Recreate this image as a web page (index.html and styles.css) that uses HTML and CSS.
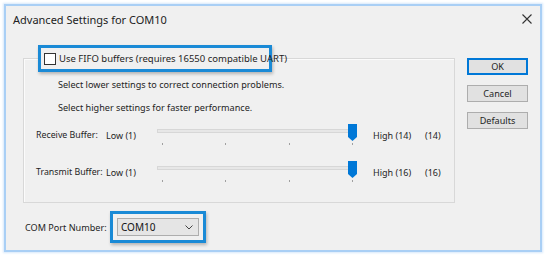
FILE: index.html
```html
<!DOCTYPE html>
<html>
<head>
<meta charset="utf-8">
<link rel="stylesheet" href="styles.css">
</head>
<body>
<div class="window">
  <div class="titlebar">
    <span class="title">Advanced Settings for COM10</span>
    <svg class="close" width="10" height="10" viewBox="0 0 10 10"><path d="M0.5 0.5L9.5 9.5M9.5 0.5L0.5 9.5" stroke="#333" stroke-width="1.1" fill="none"/></svg>
  </div>
  <div class="main">
    <div class="left">
      <fieldset class="group">
        <legend class="hl legend">
          <label class="check"><span class="box"></span>Use FIFO buffers (requires 16550 compatible UART)</label>
        </legend>
        <p class="hint first">Select lower settings to correct connection problems.</p>
        <p class="hint">Select higher settings for faster performance.</p>
        <div class="srow">
          <span class="lbl">Receive Buffer:</span>
          <span class="low">Low (1)</span>
          <div class="slider">
            <div class="track"></div>
            <svg class="thumb" width="9" height="17" viewBox="0 0 9 17"><path d="M0 0H9V13L4.5 17L0 13Z" fill="#0078d7"/></svg>
            <div class="ticks"><i></i><i></i><i></i><i></i></div>
          </div>
          <span class="high">High (14)</span>
          <span class="val">(14)</span>
        </div>
        <div class="srow second">
          <span class="lbl">Transmit Buffer:</span>
          <span class="low">Low (1)</span>
          <div class="slider">
            <div class="track"></div>
            <svg class="thumb" width="9" height="17" viewBox="0 0 9 17"><path d="M0 0H9V13L4.5 17L0 13Z" fill="#0078d7"/></svg>
            <div class="ticks"><i></i><i></i><i></i><i></i></div>
          </div>
          <span class="high">High (16)</span>
          <span class="val">(16)</span>
        </div>
      </fieldset>
      <div class="comrow">
        <span class="comlbl">COM Port Number:</span>
        <div class="hl comhl">
          <div class="combo">
            <span>COM10</span>
            <svg width="8" height="5" viewBox="0 0 8 5"><path d="M0.5 0.5L4 4L7.5 0.5" stroke="#444" stroke-width="1" fill="none"/></svg>
          </div>
        </div>
      </div>
    </div>
    <div class="buttons">
      <button class="btn default">OK</button>
      <button class="btn">Cancel</button>
      <button class="btn">Defaults</button>
    </div>
  </div>
</div>
</body>
</html>
```

FILE: styles.css
```css
* { box-sizing: border-box; }
html, body { margin: 0; padding: 0; background: #ffffff; }
body {
  width: 547px;
  height: 259px;
  font-family: "Noto Sans", "Open Sans", sans-serif;
  font-size: 9.1px;
  color: #1e1e1e;
  padding: 4px 5px 0 4px;
  white-space: nowrap;
}
.window {
  width: 538px;
  height: 248px;
  background: #f0f0f0;
  border: 2px solid #a9cff5;
  box-shadow: 0 0 2px 1px #d6e8fb;
  display: flex;
  flex-direction: column;
}
.titlebar {
  height: 28px;
  display: flex;
  align-items: center;
  justify-content: space-between;
  padding: 0 8px 2px 7px;
}
.title { font-size: 11px; color: #222; }
.close { display: block; }
.main {
  display: flex;
  padding: 11px 0 0 17px;
  gap: 12px;
}
.left { width: 432px; }
.group {
  margin: 0;
  padding: 0 0 19px 0;
  border: 1px solid #d8d8d8;
  box-shadow: inset 1px 1px 0 #fbfbfb;
  min-width: 0;
}
.hl {
  border: 3px solid #1a8ad6;
  box-shadow: 1px 2px 3px rgba(0,0,0,0.25);
  background: #f0f0f0;
}
.legend {
  margin-left: 14px;
  width: 234px;
  height: 27px;
  padding: 0 0 0 3px;
  display: flex;
  align-items: center;
}
.check { display: flex; align-items: center; gap: 3px; font-size: 9.5px; }
.box {
  width: 12px; height: 12px;
  background: #fff;
  border: 1px solid #333;
  display: inline-block;
}
.hint {
  margin: 9px 0 0 34px;
  line-height: 14px;
}
.hint.first { margin-top: 6px; }
.srow {
  display: grid;
  grid-template-columns: 70px 51px 202px 52px auto;
  column-gap: 0;
  align-items: center;
  height: 22px;
  margin-top: 9px;
  padding-left: 12px;
  font-size: 9px;
}
.srow .lbl { font-size: 8.8px; }
.srow .high { padding-left: 14px; }
.srow .val { padding-left: 14px; }
.srow.second { margin-top: 15px; }
.slider { position: relative; height: 22px; }
.track {
  position: absolute;
  left: 0; right: 4px; top: 5px;
  height: 4px;
  background: #e7e7e7;
  border: 1px solid #d7d7d7;
}
.thumb { position: absolute; right: 2px; top: 0; }
.ticks {
  position: absolute; left: 5px; right: 6px; top: 19px;
  display: flex; justify-content: space-between;
}
.ticks i { display: block; width: 1px; height: 2px; background: #a0a0a0; }
.comrow {
  display: flex;
  align-items: center;
  margin-top: 8px;
  padding-left: 2px;
}
.comlbl { width: 85px; }
.comhl { padding: 4px; }
.combo {
  width: 82px; height: 18px;
  background: #e5e5e5;
  border: 1px solid #adadad;
  display: flex; align-items: center; justify-content: space-between;
  padding: 0 5px 0 3px;
  font-size: 10px;
  color: #111;
}
.combo svg { display: block; }
.buttons {
  display: flex;
  flex-direction: column;
  gap: 10px;
  padding-top: 13px;
}
.btn {
  width: 61px; height: 17px;
  background: #e1e1e1;
  border: 1px solid #adadad;
  font: inherit;
  color: #1e1e1e;
  padding: 0;
  line-height: 15px;
}
.btn.default { border: 2px solid #0078d7; line-height: 13px; }
```
